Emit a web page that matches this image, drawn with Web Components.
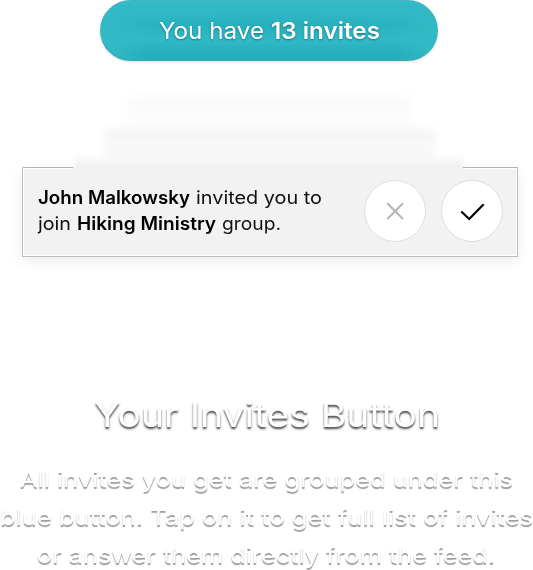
<!DOCTYPE html>
<html lang="en">
<head>
<meta charset="utf-8">
<title>Your Invites Button</title>
<style>
html, body { margin: 0; width: 533px; height: 570px; overflow: hidden; background: #fff; }
body { font-family: Inter, "Open Sans", sans-serif; }
</style>
</head>
<body>
<invites-page></invites-page>
<script>
const define = (name, html, setup) => {
  const template = document.createElement('template');
  template.innerHTML = html;
  customElements.define(name, class extends HTMLElement {
    constructor() {
      super();
      this.attachShadow({ mode: 'open' }).append(template.content.cloneNode(true));
    }
    connectedCallback() { if (setup) setup.call(this, this.shadowRoot); }
  });
};

define('text-run', `
<style>
:host { display: block; flex: none; white-space: nowrap; }
span { display: inline-block; transform-origin: 0 0; }
</style><span><slot></slot></span>`, function (root) {
  const width = Number(this.getAttribute('width'));
  const span = root.querySelector('span');
  this.style.width = width + 'px';
  span.style.transform = 'scaleX(' + width / span.getBoundingClientRect().width + ')';
});

define('invites-button', `
<style>
:host { display: flex; flex: none; box-sizing: border-box; width: 338px; height: 61px; margin-left: 100px;
  padding-left: 59px; gap: 7px; border-radius: 31px; color: #fff; font-size: 22.5px; line-height: 62px;
  background:
    radial-gradient(ellipse 130px 16px at 50% 43%, rgba(28,158,172,.2), transparent),
    linear-gradient(90deg, #31b9c6 3%, transparent 14%, transparent 88%, #31b9c6 98%),
    linear-gradient(#35bcc9, #2fb8c5 20%, #2bb3c0 40%, #30b9c6 66%, #25adba 88%, #27afbc);
  box-shadow: inset 0 -1px 1px #3aa9b3, inset 0 1px 1px #45b5c0, 0 1px 3px rgba(0,0,0,.13);
  text-shadow: 0 1px 2px rgba(0,70,80,.55); }
</style><slot></slot>`);

define('card-stack', `
<style>
:host { display: grid; flex: none; height: 106px; overflow: hidden; }
i { grid-area: 1 / 1; filter: blur(4px); }
.a { margin: 34px 121px -10px 127px; background: linear-gradient(#fefefe, #f9f9f9 10%, #fcfcfc 17%, #fcfcfc 45%, #f7f7f7); }
.b { margin: 68px 97px -10px 104px; background: linear-gradient(#f8f8f8, #f2f2f2 12%, #f9f9f9 26%, #f6f6f6 62%, #f2f2f2); }
.c { margin: 96px 70px -10px 74px; background: linear-gradient(#f9f9f9, #f2f2f2 60%); filter: blur(2.5px); }
</style><i class="a"></i><i class="b"></i><i class="c"></i>`);

define('round-action', `
<style>
:host { display: grid; place-items: center; box-sizing: border-box; width: 62px; height: 62px; flex: none;
  border: 1px solid #dedede; border-radius: 50%; background: #fff; }
svg { display: block; width: 60px; height: 60px; fill: none; stroke-width: 2; stroke-linecap: butt; }
.no { stroke: #b5b5b5; }
.yes { stroke: #000; stroke-width: 2.2; }
path { display: none; }
:host([kind=no]) .no, :host([kind=yes]) .yes { display: inline; }
</style><svg viewBox="0 0 60 60"><path class="no" d="M22.3 22.3L38 38M38 22.3L22.3 38"/><path class="yes" d="M19.3 30.5L27.2 38L41.7 23.2"/></svg>`);

define('invite-card', `
<style>
:host { display: grid; flex: none; grid-template-columns: 311px 62px 62px; column-gap: 15px; box-sizing: border-box;
  width: 496px; height: 90px; margin-left: 22px; padding: 12px 0 0 15px;
  border: 1px solid #bdbdbd; border-top-color: transparent;
  background:
    linear-gradient(90deg, #b5b5b5 51px, #f2f2f2 51px 441px, #b5b5b5 441px) border-box 0 0 / 100% 1px no-repeat,
    #f2f2f2;
  box-shadow: inset 0 0 0 1px #fff, 0 4px 12px rgba(0,0,0,.08);
  position: relative; }
:host::after { content: ""; position: absolute; left: 50px; top: 0; width: 390px; height: 1px; background: #f2f2f2; }
.copy { padding-top: 5px; font-size: 18px; line-height: 26px; color: #111; }
.line { display: flex; gap: 6px; }
text-run[bold] { font-weight: 560; color: #000; }
</style>
<div class="copy">
<div class="line"><text-run bold width="152">John Malkowsky</text-run><text-run width="126">invited you to</text-run></div>
<div class="line"><text-run width="33">join</text-run><text-run bold width="139">Hiking Ministry</text-run><text-run width="59">group.</text-run></div>
</div>
<round-action kind="no"></round-action><round-action kind="yes"></round-action>`);

define('feature-caption', `
<style>
:host { display: flex; flex: none; flex-direction: column; color: #fff; margin-top: 138px; }
.title { font-size: 33.5px; line-height: 40px; margin-left: 94px; text-shadow: 0 2px 2px rgba(0,0,0,.75); height: 65px; }
.body { font-size: 22px; line-height: 38px; text-shadow: 0 2px 1px rgba(0,0,0,.42); }
.one { margin-left: 20px; } .three { margin-left: 37px; }
</style>
<text-run class="title" width="346">Your Invites Button</text-run>
<text-run class="body one" width="493">All invites you get are grouped under this</text-run>
<text-run class="body" width="533">blue button. Tap on it to get full list of invites</text-run>
<text-run class="body three" width="458">or answer them directly from the feed.</text-run>`);

define('invites-page', `
<style>
:host { display: flex; flex-direction: column; width: 533px; height: 570px; }
.strong { font-weight: 600; }
.light { font-weight: 400; }
</style>
<invites-button><text-run class="light" width="105">You have</text-run><text-run class="strong" width="109">13 invites</text-run></invites-button>
<card-stack></card-stack>
<invite-card></invite-card>
<feature-caption></feature-caption>`);
</script>
</body>
</html>
